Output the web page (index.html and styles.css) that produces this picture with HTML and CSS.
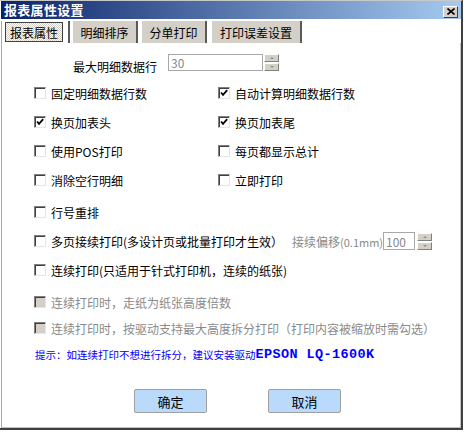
FILE: index.html
```html
<!DOCTYPE html>
<html lang="zh-CN">
<head>
  <meta charset="UTF-8">
  <title>报表属性设置</title>
  <link rel="stylesheet" href="styles.css">
</head>
<body>
  <div class="window">
    <!-- 标题栏 -->
    <div class="titlebar">
      <span class="title">报表属性设置</span>
      <span class="close-btn">
        <svg width="8" height="7" viewBox="0 0 8 7"><path d="M0.5 0.5 L7.5 6.5 M7.5 0.5 L0.5 6.5" stroke="#000" stroke-width="1.6"/></svg>
      </span>
    </div>

    <!-- 页签 -->
    <div class="tabs">
      <div class="tab tab-active"><span class="tab-face">报表属性</span></div>
      <div class="tab tab-sort">明细排序</div>
      <div class="tab tab-split">分单打印</div>
      <div class="tab tab-error">打印误差设置</div>
    </div>

    <div class="panel">
      <div class="row row-field">
        <span class="field-label">最大明细数据行</span>
        <span class="input-box input-wide">30</span>
        <span class="spinner"><span class="spin spin-up"></span><span class="spin spin-down"></span></span>
      </div>

      <div class="row row-pair">
        <label class="check"><span class="box"></span>固定明细数据行数</label>
        <label class="check"><span class="box"><svg width="10" height="10" viewBox="0 0 10 10"><path d="M2 4.5 L4 6.8 L8.2 2.2" fill="none" stroke="#000" stroke-width="1.8"/></svg></span>自动计算明细数据行数</label>
      </div>

      <div class="row row-pair">
        <label class="check"><span class="box"><svg width="10" height="10" viewBox="0 0 10 10"><path d="M2 4.5 L4 6.8 L8.2 2.2" fill="none" stroke="#000" stroke-width="1.8"/></svg></span>换页加表头</label>
        <label class="check"><span class="box"><svg width="10" height="10" viewBox="0 0 10 10"><path d="M2 4.5 L4 6.8 L8.2 2.2" fill="none" stroke="#000" stroke-width="1.8"/></svg></span>换页加表尾</label>
      </div>

      <div class="row row-pair">
        <label class="check"><span class="box"></span>使用POS打印</label>
        <label class="check"><span class="box"></span>每页都显示总计</label>
      </div>

      <div class="row row-pair">
        <label class="check"><span class="box"></span>消除空行明细</label>
        <label class="check"><span class="box"></span>立即打印</label>
      </div>

      <div class="row drop">
        <label class="check"><span class="box"></span>行号重排</label>
      </div>

      <div class="row">
        <label class="check check-long"><span class="box"></span>多页接续打印(多设计页或批量打印才生效）</label>
        <span class="offset-label">接续偏移<span class="unit">(0.1mm)</span></span>
        <span class="input-box input-small">100</span>
        <span class="spinner"><span class="spin spin-up"></span><span class="spin spin-down"></span></span>
      </div>

      <div class="row">
        <label class="check"><span class="box"></span>连续打印(只适用于针式打印机，连续的纸张)</label>
      </div>

      <div class="row drop">
        <label class="check disabled"><span class="box"></span>连续打印时，走纸为纸张高度倍数</label>
      </div>

      <div class="row lift">
        <label class="check disabled"><span class="box"></span>连续打印时，按驱动支持最大高度拆分打印（打印内容被缩放时需勾选）</label>
      </div>

      <div class="row lift hint">提示：如连续打印不想进行拆分，建议安装驱动<span class="hint-model">EPSON LQ-1600K</span></div>

      <div class="buttons">
        <button class="btn">确定</button>
        <button class="btn">取消</button>
      </div>
    </div>
  </div>
</body>
</html>
```

FILE: styles.css
```css
* {
  box-sizing: border-box;
}

body {
  margin: 0;
  padding: 0;
  background: #fff;
  font-family: "Noto Sans CJK SC", "Liberation Sans", sans-serif;
  font-size: 12px;
  color: #000;
}

.window {
  width: 463px;
  padding-left: 1px;
  border-top: 1px solid #c8c8c8;
  border-right: 2px solid #404040;
  border-bottom: 2px solid #404040;
  background: #fff;
}

.titlebar {
  display: flex;
  align-items: center;
  height: 18px;
  padding-left: 3px;
  padding-right: 3px;
  background: linear-gradient(to right, #0a246a, #a6caf0);
}

.title {
  color: #fff;
  font-weight: bold;
  font-size: 13px;
  line-height: 18px;
  letter-spacing: 0.3px;
}

.close-btn {
  margin-left: auto;
  width: 15px;
  height: 12px;
  margin-top: 3px;
  display: flex;
  align-items: center;
  justify-content: center;
  background: #d4d0c8;
  border: 1px solid;
  border-color: #fff #404040 #404040 #fff;
}

/* 页签 */
.tabs {
  display: flex;
  margin-top: 2px;
  height: 22px;
  padding-left: 1px;
  border-left: 1px solid #a8a8a8;
}

.tab {
  height: 22px;
  display: flex;
  align-items: center;
  justify-content: center;
  background: #d4d0c8;
  border-right: 2px solid #5a5a5a;
}

.tab-active {
  background: #fff;
  align-items: flex-start;
  padding-left: 2px;
  padding-right: 5px;
  margin-right: 3px;
}

.tab-face {
  width: 58px;
  height: 20px;
  margin-top: 1px;
  display: flex;
  align-items: center;
  justify-content: center;
  border: 1px solid #404040;
  background: repeating-conic-gradient(#d4d0c8 0 25%, #fff 0 50%) 0 0 / 2px 2px;
}

.tab-sort {
  width: 65px;
  margin-right: 4px;
}

.tab-split {
  width: 65px;
  margin-right: 5px;
}

.tab-error {
  width: 90px;
}

/* 内容区 */
.panel {
  height: 385px;
  display: flex;
  flex-direction: column;
  gap: 9px;
  padding-top: 11px;
  border-left: 1px solid #a8a8a8;
  border-right: 1px solid #c0c0c0;
  border-bottom: 1px solid #c0c0c0;
}

.row {
  height: 20px;
  display: flex;
  align-items: center;
  padding-left: 32px;
  white-space: nowrap;
}

.row.drop {
  margin-top: 3px;
}

.row.lift {
  margin-top: -3px;
}

.row-pair {
  display: grid;
  grid-template-columns: 184px 1fr;
}

.row-field {
  align-items: flex-start;
  padding-left: 71px;
}

.field-label {
  width: 84px;
  margin-top: 7px;
  margin-right: 11px;
  line-height: 12px;
}

.check {
  display: flex;
  align-items: center;
  gap: 5px;
}

.check-long {
  width: 258px;
}

.box {
  width: 12px;
  height: 12px;
  flex: none;
  display: flex;
  align-items: center;
  justify-content: center;
  background: #fff;
  border: 1px solid;
  border-color: #808080 #e4e4e4 #e4e4e4 #808080;
  box-shadow: inset 1px 1px 0 #404040;
}

.check.disabled {
  color: #8a8a8a;
}

.check.disabled .box {
  background: #d4d0c8;
}

.input-box {
  height: 17px;
  display: flex;
  align-items: center;
  padding-left: 2px;
  border: 1px solid #a8a8a8;
  color: #8a8a8a;
  background: #fff;
}

.input-wide {
  width: 95px;
}

.input-small {
  width: 32px;
  height: 18px;
}

.spinner {
  width: 15px;
  height: 17px;
  margin-left: 1px;
  display: flex;
  flex-direction: column;
  gap: 1px;
}

.row .input-small + .spinner {
  margin-left: 2px;
}

.spin {
  flex: 1;
  position: relative;
  background: #d4d0c8;
  border: 1px solid;
  border-color: #fff #808080 #808080 #fff;
}

.spin::after {
  content: "";
  position: absolute;
  left: 5px;
  top: 2px;
  border-left: 2px solid transparent;
  border-right: 2px solid transparent;
}

.spin-up::after {
  border-bottom: 2px solid #909090;
}

.spin-down::after {
  border-top: 2px solid #909090;
}

.offset-label {
  width: 88px;
  margin-right: 3px;
  color: #8a8a8a;
}

.unit {
  font-size: 11px;
}

.hint {
  color: #0000ff;
  font-size: 10.5px;
  padding-left: 33px;
}

.hint-model {
  font-family: "Liberation Mono", monospace;
  font-size: 13.5px;
  font-weight: bold;
  letter-spacing: 0.4px;
}

.buttons {
  display: flex;
  gap: 61px;
  margin-top: 16px;
  padding-left: 132px;
}

.btn {
  width: 73px;
  height: 24px;
  padding: 0;
  font-family: inherit;
  font-size: 13px;
  color: #000;
  background: #b9dafa;
  border: 1px solid #a0a0a0;
  border-radius: 2px;
}
```
